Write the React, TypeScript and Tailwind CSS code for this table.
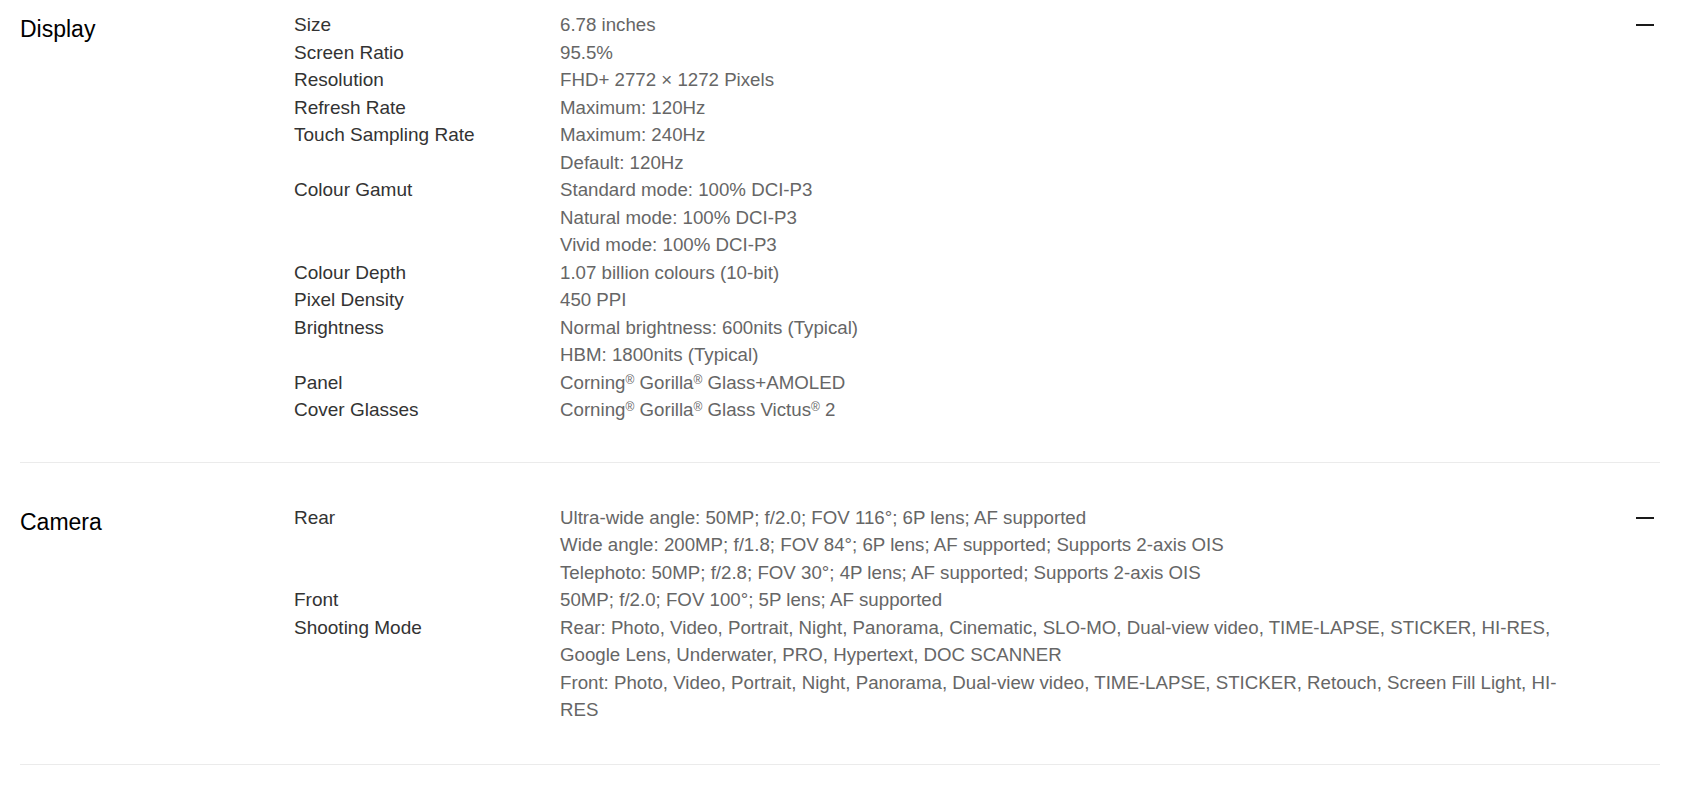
import React from "react";

type Spec = { label: string; values: React.ReactNode[] };

const R = () => <span className="text-[12px] align-[5px] leading-none">®</span>;

const display: Spec[] = [
  { label: "Size", values: ["6.78 inches"] },
  { label: "Screen Ratio", values: ["95.5%"] },
  { label: "Resolution", values: ["FHD+ 2772 × 1272 Pixels"] },
  { label: "Refresh Rate", values: ["Maximum: 120Hz"] },
  { label: "Touch Sampling Rate", values: ["Maximum: 240Hz", "Default: 120Hz"] },
  {
    label: "Colour Gamut",
    values: ["Standard mode: 100% DCI-P3", "Natural mode: 100% DCI-P3", "Vivid mode: 100% DCI-P3"],
  },
  { label: "Colour Depth", values: ["1.07 billion colours (10-bit)"] },
  { label: "Pixel Density", values: ["450 PPI"] },
  { label: "Brightness", values: ["Normal brightness: 600nits (Typical)", "HBM: 1800nits (Typical)"] },
  {
    label: "Panel",
    values: [
      <>
        Corning<R /> Gorilla<R /> Glass+AMOLED
      </>,
    ],
  },
  {
    label: "Cover Glasses",
    values: [
      <>
        Corning<R /> Gorilla<R /> Glass Victus<R /> 2
      </>,
    ],
  },
];

const camera: Spec[] = [
  {
    label: "Rear",
    values: [
      "Ultra-wide angle: 50MP; f/2.0; FOV 116°; 6P lens; AF supported",
      "Wide angle: 200MP; f/1.8; FOV 84°; 6P lens; AF supported; Supports 2-axis OIS",
      "Telephoto: 50MP; f/2.8; FOV 30°; 4P lens; AF supported; Supports 2-axis OIS",
    ],
  },
  { label: "Front", values: ["50MP; f/2.0; FOV 100°; 5P lens; AF supported"] },
  {
    label: "Shooting Mode",
    values: [
      "Rear: Photo, Video, Portrait, Night, Panorama, Cinematic, SLO-MO, Dual-view video, TIME-LAPSE, STICKER, HI-RES, Google Lens, Underwater, PRO, Hypertext, DOC SCANNER",
      "Front: Photo, Video, Portrait, Night, Panorama, Dual-view video, TIME-LAPSE, STICKER, Retouch, Screen Fill Light, HI-RES",
    ],
  },
];

function Section({ title, specs, className }: { title: string; specs: Spec[]; className: string }) {
  return (
    <section className={`flex border-b border-[#ebebeb] ${className}`}>
      <h2 className="w-[274px] shrink-0 pt-[2px] text-[23px] leading-[32px] text-black font-normal">{title}</h2>
      <div className="flex-1 flex flex-col">
        {specs.map((s) => (
          <div key={s.label} className="flex leading-[27.5px]">
            <div className="w-[266px] shrink-0 text-[19px] text-[#333333]">{s.label}</div>
            <div className="w-[1010px] text-[18.7px] text-[#666666]">
              {s.values.map((v, i) => (
                <div key={i}>{v}</div>
              ))}
            </div>
          </div>
        ))}
      </div>
      <div className="w-[24px] shrink-0 flex justify-start pt-[13px]">
        <div className="w-[18px] h-[2px] bg-[#1a1a1a]" />
      </div>
    </section>
  );
}

export default function App() {
  return (
    <div className="min-h-[799px] bg-white" style={{ fontFamily: '"Liberation Sans", Arial, sans-serif' }}>
      <div className="ml-[20px] w-[1640px]">
        <Section title="Display" specs={display} className="pt-[11px] pb-[38px]" />
        <Section title="Camera" specs={camera} className="pt-[41px] pb-[40px]" />
      </div>
    </div>
  );
}
